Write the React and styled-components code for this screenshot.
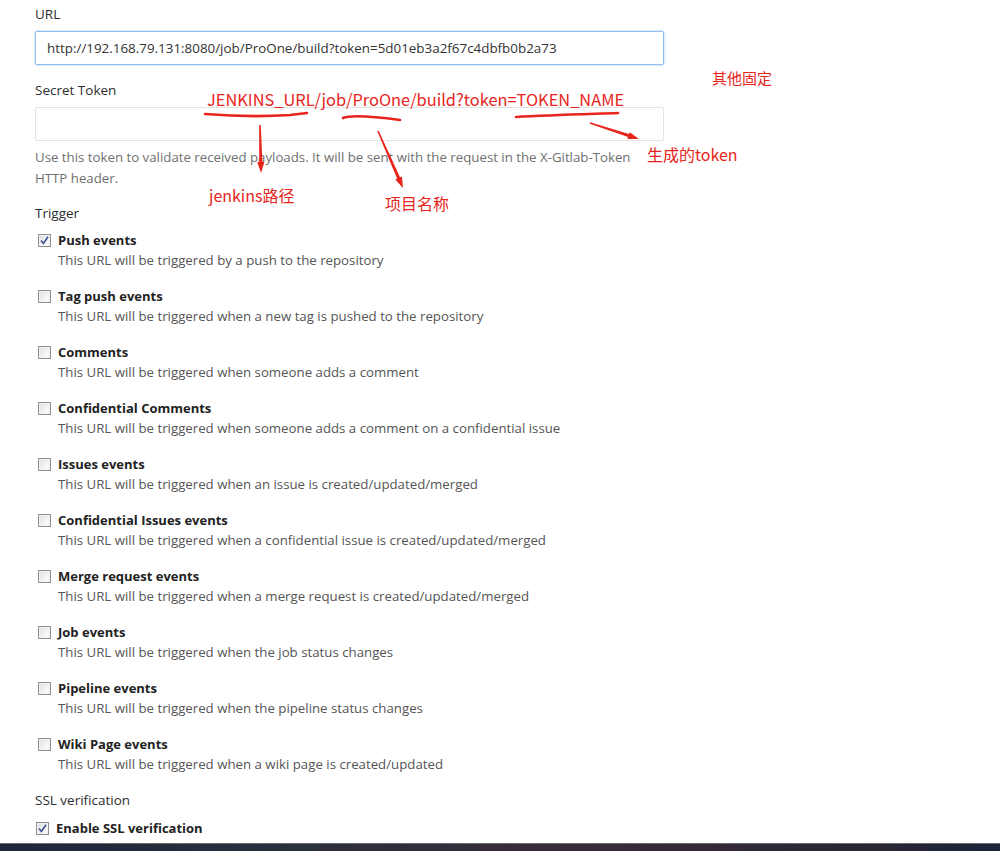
import React from "react";
import styled, { createGlobalStyle } from "styled-components";

const GlobalStyle = createGlobalStyle`
  html, body {
    margin: 0;
    padding: 0;
    background: #fff;
    overflow: hidden;
  }
  body {
    font-family: "Open Sans", "Noto Sans CJK SC", sans-serif;
    color: #2e2e2e;
  }
`;

const triggers = [
  { title: "Push events", text: "This URL will be triggered by a push to the repository", checked: true },
  { title: "Tag push events", text: "This URL will be triggered when a new tag is pushed to the repository" },
  { title: "Comments", text: "This URL will be triggered when someone adds a comment" },
  { title: "Confidential Comments", text: "This URL will be triggered when someone adds a comment on a confidential issue" },
  { title: "Issues events", text: "This URL will be triggered when an issue is created/updated/merged" },
  { title: "Confidential Issues events", text: "This URL will be triggered when a confidential issue is created/updated/merged" },
  { title: "Merge request events", text: "This URL will be triggered when a merge request is created/updated/merged" },
  { title: "Job events", text: "This URL will be triggered when the job status changes" },
  { title: "Pipeline events", text: "This URL will be triggered when the pipeline status changes" },
  { title: "Wiki Page events", text: "This URL will be triggered when a wiki page is created/updated" },
];

// tapered hand-drawn arrow: thin at the start, wider towards the head
const arrowPoints = (x1, y1, x2, y2) => {
  const dx = x2 - x1;
  const dy = y2 - y1;
  const len = Math.hypot(dx, dy);
  const ux = dx / len;
  const uy = dy / len;
  const nx = -uy;
  const ny = ux;
  const head = 11;
  const bx = x2 - ux * head;
  const by = y2 - uy * head;
  const p = (x, y, w) => [x + nx * w, y + ny * w];
  const pts = [
    p(x1, y1, 0.8),
    p(bx, by, 1.6),
    p(bx, by, 3.6),
    [x2, y2],
    p(bx, by, -3.6),
    p(bx, by, -1.6),
    p(x1, y1, -0.8),
  ];
  return pts.map((q) => q.map((v) => v.toFixed(1)).join(",")).join(" ");
};

const Check = ({ checked }) => (
  <Box>
    {checked && (
      <svg width="9" height="9" viewBox="0 0 9 9">
        <path d="M1 4.6 L3.4 7.4 L8 0.8" fill="none" stroke="#3d4f94" strokeWidth="1.6" />
      </svg>
    )}
  </Box>
);

const Annotations = () => (
  <Overlay>
    <Note $x={207} $y={88} $size={16.4}>JENKINS_URL/job/ProOne/build?token=TOKEN_NAME</Note>
    <Note $x={712} $y={67} $size={15}>其他固定</Note>
    <Note $x={647} $y={143} $size={16}>生成的token</Note>
    <Note $x={209} $y={184} $size={16}>jenkins路径</Note>
    <Note $x={385} $y={192} $size={16}>项目名称</Note>
    <Marks width="1000" height="851" viewBox="0 0 1000 851">
      <g fill="none" stroke="#e8251c" strokeLinecap="round">
        <path d="M205 114 C230 116 260 117 290 115 L307 113" strokeWidth="2.6" />
        <path d="M343 118 C350 115 370 116 400 120" strokeWidth="2.6" />
        <path d="M516 117 C550 115 590 114 618 113" strokeWidth="2.6" />
      </g>
      <g fill="#e8251c">
        <polygon points={arrowPoints(260, 125, 261, 173)} />
        <polygon points={arrowPoints(378, 131, 403, 188)} />
        <polygon points={arrowPoints(590, 123, 639, 139)} />
      </g>
    </Marks>
  </Overlay>
);

export default function App() {
  return (
    <Page>
      <GlobalStyle />
      <Form>
        <Label>URL</Label>
        <Input $focused readOnly value="http://192.168.79.131:8080/job/ProOne/build?token=5d01eb3a2f67c4dbfb0b2a73" />
        <Label $top={15}>Secret Token</Label>
        <Input readOnly value="" />
        <Help>
          Use this token to validate received payloads. It will be sent with the request in the X-Gitlab-Token
          <br />
          HTTP header.
        </Help>
        <Label $top={14}>Trigger</Label>
        <List>
          {triggers.map((t) => (
            <Item key={t.title}>
              <Row>
                <Check checked={t.checked} />
                <Title>{t.title}</Title>
              </Row>
              <Desc>{t.text}</Desc>
            </Item>
          ))}
        </List>
        <Label $top={15}>SSL verification</Label>
        <SslRow>
          <Check checked />
          <Title>Enable SSL verification</Title>
        </SslRow>
      </Form>
      <Taskbar />
      <Annotations />
    </Page>
  );
}

const Page = styled.div`
  position: relative;
  width: 1000px;
  height: 851px;
  display: flex;
  flex-direction: column;
`;

const Form = styled.div`
  flex: 1;
  padding: 4px 0 0 35px;
  display: flex;
  flex-direction: column;
  align-items: flex-start;
`;

const Label = styled.div`
  font-size: 13.5px;
  line-height: 20px;
  color: #2e2e2e;
  margin-top: ${(p) => p.$top || 0}px;
  margin-bottom: 7px;
`;

const Input = styled.input`
  box-sizing: border-box;
  width: 629px;
  height: 34px;
  margin: 0;
  padding: 0 11px;
  border: 1px solid ${(p) => (p.$focused ? "#8fbde9" : "#e3e3e3")};
  border-radius: 2px;
  box-shadow: ${(p) => (p.$focused ? "0 0 3px rgba(120, 170, 230, 0.6)" : "none")};
  font-family: "Open Sans", sans-serif;
  font-size: 13.4px;
  color: #333;
  background: #fff;
  outline: none;
`;

const Help = styled.div`
  margin-top: 6px;
  font-size: 13.25px;
  line-height: 21px;
  color: #707070;
`;

const List = styled.div`
  display: flex;
  flex-direction: column;
  gap: 15px;
`;

const Item = styled.div`
  display: flex;
  flex-direction: column;
`;

const Row = styled.div`
  display: flex;
  align-items: center;
  height: 20px;
  padding-left: 3px;
  gap: 7px;
`;

const SslRow = styled(Row)`
  margin-top: 1px;
  padding-left: 1px;
`;

const Box = styled.span`
  box-sizing: border-box;
  width: 13px;
  height: 13px;
  border: 1px solid #8e8f8f;
  background: linear-gradient(135deg, #dcdcdc 0%, #f4f4f4 60%, #ffffff 100%);
  box-shadow: inset 0 0 0 1px #f2f2f2;
  display: flex;
  align-items: center;
  justify-content: center;
`;

const Title = styled.span`
  font-size: 13px;
  font-weight: 700;
  color: #222;
`;

const Desc = styled.div`
  padding-left: 23px;
  font-size: 13.25px;
  line-height: 21px;
  color: #555;
`;

const Taskbar = styled.div`
  height: 7px;
  border-top: 1px solid #6b6f78;
  background: linear-gradient(90deg, #1e2638 0%, #2b2f3e 30%, #3a2a36 60%, #1d2436 100%);
`;

const Overlay = styled.div`
  position: absolute;
  inset: 0;
  pointer-events: none;
`;

const Note = styled.div`
  position: absolute;
  left: ${(p) => p.$x}px;
  top: ${(p) => p.$y}px;
  font-family: "Noto Sans CJK SC", sans-serif;
  font-size: ${(p) => p.$size}px;
  line-height: 22px;
  color: #e8251c;
  white-space: nowrap;
`;

const Marks = styled.svg`
  position: absolute;
  left: 0;
  top: 0;
`;
